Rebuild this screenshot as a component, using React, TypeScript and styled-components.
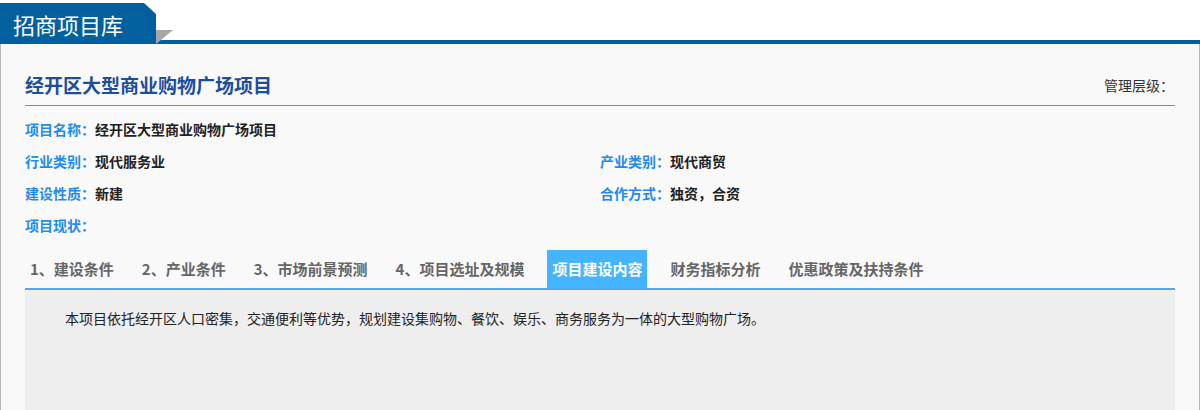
import React from "react";
import styled, { createGlobalStyle } from "styled-components";

const GlobalStyle = createGlobalStyle`
  html, body {
    margin: 0;
    padding: 0;
    background: #ffffff;
  }
  body {
    font-family: "Noto Sans CJK SC", "Noto Sans", "Liberation Sans", sans-serif;
    color: #333;
  }
`;

const fields = [
  { label: "项目名称：", value: "经开区大型商业购物广场项目", full: true },
  { label: "行业类别：", value: "现代服务业" },
  { label: "产业类别：", value: "现代商贸" },
  { label: "建设性质：", value: "新建" },
  { label: "合作方式：", value: "独资，合资" },
  { label: "项目现状：", value: "", full: true },
];

const tabs = [
  "1、建设条件",
  "2、产业条件",
  "3、市场前景预测",
  "4、项目选址及规模",
  "项目建设内容",
  "财务指标分析",
  "优惠政策及扶持条件",
];

const App = () => {
  const [active, setActive] = React.useState<number>(4);

  return (
    <>
      <GlobalStyle />
      <Header>
        <HeaderTab>招商项目库</HeaderTab>
        <HeaderRest>
          <Fold viewBox="0 0 17 14" width="17" height="14">
            <polygon points="0,0 17,0 0,14" fill="#a7a7a7" />
          </Fold>
        </HeaderRest>
      </Header>

      <Panel>
        <TitleRow>
          <Title>经开区大型商业购物广场项目</Title>
          <Level>管理层级：</Level>
        </TitleRow>

        <Fields>
          {fields.map((f) => (
            <Field key={f.label} full={f.full}>
              <Label>{f.label}</Label>
              <Value>{f.value}</Value>
            </Field>
          ))}
        </Fields>

        <TabBar>
          {tabs.map((t, i) => (
            <TabItem key={t} active={i === active} onClick={() => setActive(i)}>
              {t}
            </TabItem>
          ))}
        </TabBar>

        <Content>
          <p>
            本项目依托经开区人口密集，交通便利等优势，规划建设集购物、餐饮、娱乐、商务服务为一体的大型购物广场。
          </p>
        </Content>
      </Panel>
    </>
  );
};

export default App;

const Header = styled.div`
  display: flex;
  align-items: flex-end;
  height: 44px;
`;

const HeaderTab = styled.div`
  width: 156px;
  height: 41px;
  box-sizing: border-box;
  padding-left: 13px;
  background: #03609f;
  color: #fff;
  font-size: 22px;
  line-height: 42px;
  clip-path: polygon(0 0, 144px 0, 156px 11px, 156px 100%, 0 100%);
`;

const HeaderRest = styled.div`
  flex: 1;
  height: 41px;
  box-sizing: border-box;
  border-bottom: 4px solid #03609f;
  position: relative;
`;

const Fold = styled.svg`
  position: absolute;
  left: 0;
  top: 27px;
  display: block;
`;

const Panel = styled.div`
  background: #f9f9f9;
  border-left: 1px solid #b9b9b9;
  border-right: 1px solid #b9b9b9;
  padding: 0 24px;
  min-height: 400px;
`;

const TitleRow = styled.div`
  display: flex;
  justify-content: space-between;
  align-items: center;
  padding: 28px 0 7px;
  border-bottom: 1px solid #5b9bdc;
`;

const Title = styled.h1`
  margin: 0;
  font-size: 19px;
  line-height: 26px;
  font-weight: 700;
  color: #1c4e9b;
`;

const Level = styled.span`
  font-size: 14px;
  color: #333;
  padding-right: 1px;
`;

const Fields = styled.div`
  display: grid;
  grid-template-columns: 575px 1fr;
  margin-top: 7px;
`;

const Field = styled.div<{ full?: boolean }>`
  grid-column: ${({ full }) => (full ? "1 / -1" : "auto")};
  display: flex;
  height: 32px;
  align-items: center;
  font-size: 14px;
  font-weight: 700;
`;

const Label = styled.span`
  color: #1f8cec;
`;

const Value = styled.span`
  color: #222;
`;

const TabBar = styled.div`
  display: flex;
  gap: 18px;
  margin-top: 9px;
  border-bottom: 2px solid #5aa5ea;
`;

const TabItem = styled.div<{ active: boolean }>`
  height: 38px;
  line-height: 38px;
  padding: 0 5px;
  font-size: 15px;
  font-weight: 700;
  cursor: pointer;
  color: ${({ active }) => (active ? "#fff" : "#666")};
  background: ${({ active }) => (active ? "#45b4fe" : "transparent")};
`;

const Content = styled.div`
  background: #eeeeee;
  min-height: 240px;
  padding: 16px 12px;

  p {
    margin: 0;
    font-size: 14px;
    line-height: 24px;
    color: #222;
    text-indent: 28px;
  }
`;
